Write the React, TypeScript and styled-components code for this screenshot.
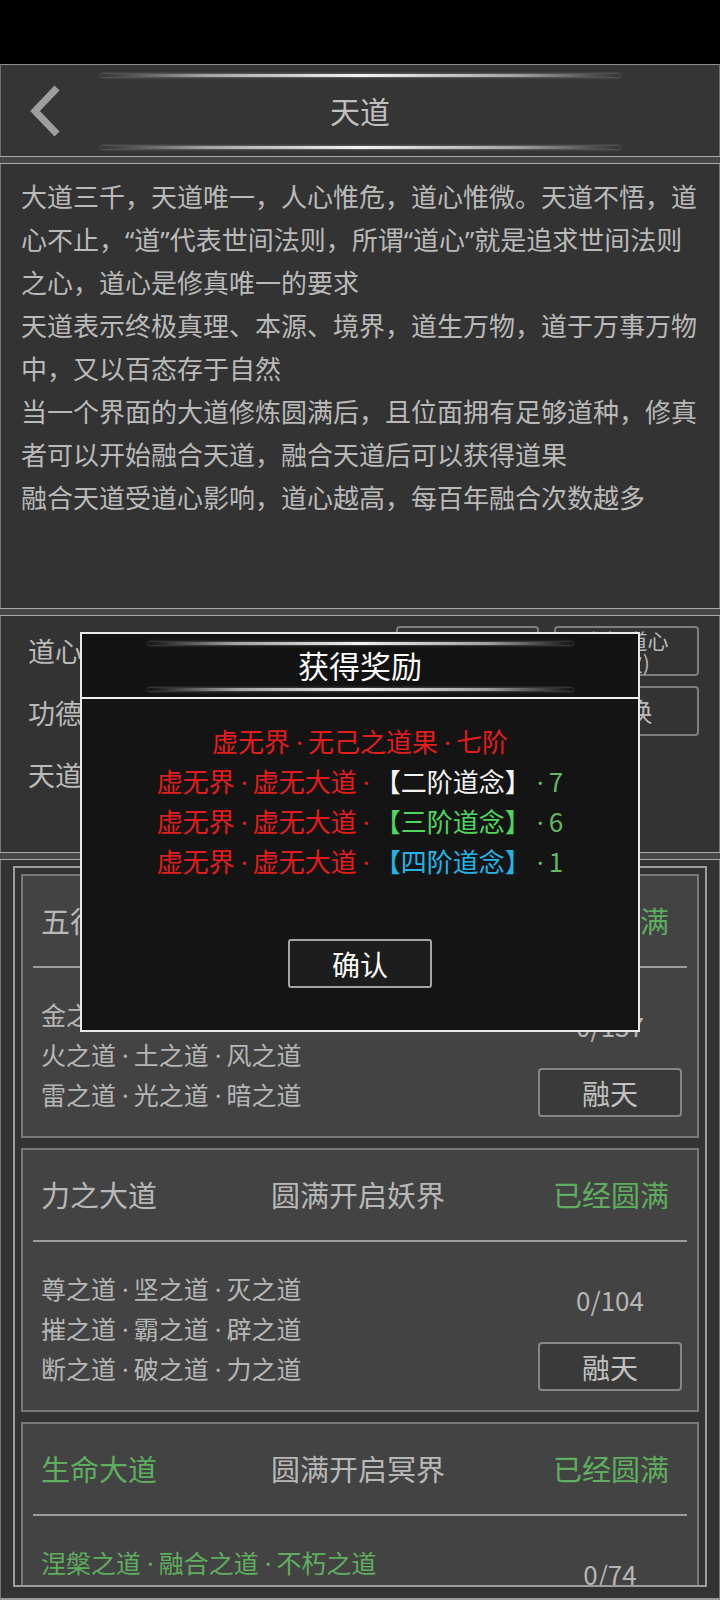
import { Fragment } from 'react';
import styled, { createGlobalStyle } from 'styled-components';

const GlobalStyle = createGlobalStyle`
  html, body {
    margin: 0;
    padding: 0;
    background: #000;
  }
  body {
    font-family: "Noto Sans CJK SC", "Noto Sans", sans-serif;
    text-spacing-trim: space-all;
  }
  * {
    box-sizing: border-box;
  }
`;

const Screen = styled.div`
  position: relative;
  width: 720px;
  height: 1600px;
  overflow: hidden;
  background: #000;
  display: flex;
  flex-direction: column;
`;

const StatusBar = styled.div`
  height: 64px;
  flex-shrink: 0;
  background: #000;
`;

const Header = styled.header`
  height: 92px;
  flex-shrink: 0;
  display: flex;
  background: #353535;
  border-top: 1px solid #8c8c8c;
  border-left: 1px solid #6c6c6c;
  border-right: 1px solid #6c6c6c;
`;

const BackButton = styled.div`
  width: 70px;
  display: flex;
  align-items: center;
  padding-left: 27px;
`;

const HeaderCenter = styled.div`
  flex: 1;
  margin-right: 70px;
  display: flex;
  flex-direction: column;
  align-items: center;
  padding-top: 9px;
`;

const Glow = styled.div<{ $width: number; $top?: number }>`
  width: ${(p) => p.$width}px;
  height: 3px;
  margin-top: ${(p) => p.$top ?? 0}px;
  border-radius: 2px;
  background: linear-gradient(
    90deg,
    rgba(150, 150, 150, 0) 0%,
    rgba(175, 175, 175, 0.9) 20%,
    #f2f2f2 50%,
    rgba(175, 175, 175, 0.9) 80%,
    rgba(150, 150, 150, 0) 100%
  );
  box-shadow: 0 0 3px rgba(220, 220, 220, 0.5);
`;

const HeaderTitle = styled.h1`
  margin: 13px 0 0;
  font-size: 30px;
  line-height: 40px;
  font-weight: 400;
  color: #c0c0c0;
`;

const Band = styled.div`
  height: 8px;
  flex-shrink: 0;
  background: #474747;
  border-top: 1px solid #a9a9a9;
  border-bottom: 1px solid #a9a9a9;
`;

const DescPanel = styled.section`
  height: 444px;
  flex-shrink: 0;
  padding: 12px 20px;
  background: #333;
  border-left: 1px solid #777;
  border-right: 1px solid #777;
`;

/* latin quotes come from Noto Sans so they stay narrow */
const DescLine = styled.div`
  font-family: "Noto Sans", "Noto Sans CJK SC", sans-serif;
  font-size: 26px;
  line-height: 43px;
  color: #bababa;
  white-space: nowrap;
`;

const StatsPanel = styled.section`
  height: 236px;
  flex-shrink: 0;
  display: flex;
  justify-content: space-between;
  padding: 4px 20px 0 27px;
  background: #333;
  border-left: 1px solid #777;
  border-right: 1px solid #777;
`;

const StatList = styled.div`
  display: flex;
  flex-direction: column;
`;

const StatRow = styled.div`
  font-size: 27px;
  line-height: 62px;
  color: #bababa;
  white-space: nowrap;
`;

const ActionGrid = styled.div`
  display: grid;
  grid-template-columns: 143px 145px;
  grid-template-rows: 50px 50px;
  column-gap: 15px;
  row-gap: 10px;
  margin-top: 6px;
`;

const ActionButton = styled.div<{ $small?: boolean; $col: number; $row: number }>`
  grid-column: ${(p) => p.$col};
  grid-row: ${(p) => p.$row};
  display: flex;
  flex-direction: column;
  align-items: center;
  justify-content: center;
  border: 2px solid #7e7e7e;
  border-radius: 4px;
  color: #bababa;
  font-size: ${(p) => (p.$small ? 21 : 26)}px;
  line-height: ${(p) => (p.$small ? 22 : 30)}px;
  white-space: nowrap;
`;

const LowerPanel = styled.section`
  flex: 1;
  padding: 6px 12px 0;
  background: #333;
  border-left: 1px solid #777;
  border-right: 1px solid #777;
  border-bottom: 2px solid #9a9a9a;
`;

const Frame = styled.div`
  height: 721px;
  overflow: hidden;
  padding: 6px 6px 0;
  border: 2px solid #9c9c9c;
  display: flex;
  flex-direction: column;
  gap: 10px;
`;

const PathCard = styled.div`
  height: 264px;
  flex-shrink: 0;
  background: #434343;
  border: 2px solid #787878;
`;

const CardHead = styled.div`
  height: 88px;
  display: grid;
  grid-template-columns: 230px 1fr auto;
  align-items: center;
  padding: 0 28px 0 18px;
  font-size: 29px;
  white-space: nowrap;
`;

const Tone = styled.span<{ $done?: boolean }>`
  color: ${(p) => (p.$done ? '#5fae5f' : '#b8b8b8')};
`;

const Divider = styled.div`
  height: 2px;
  margin: 2px 10px 0;
  background: #9d9d9d;
`;

const CardBody = styled.div`
  display: flex;
  justify-content: space-between;
  padding: 26px 15px 0 18px;
`;

const SubList = styled.div<{ $done?: boolean }>`
  font-size: 25px;
  line-height: 40px;
  color: ${(p) => (p.$done ? '#5fae5f' : '#b6b6b6')};
  white-space: nowrap;
`;

const SideColumn = styled.div`
  width: 144px;
  display: flex;
  flex-direction: column;
  align-items: center;
`;

const Count = styled.div`
  height: 64px;
  line-height: 64px;
  font-size: 26px;
  color: #b6b6b6;
`;

const FuseButton = styled.div`
  width: 144px;
  height: 49px;
  margin-top: 10px;
  display: flex;
  align-items: center;
  justify-content: center;
  border: 2px solid #868686;
  border-radius: 4px;
  background: #3a3a3a;
  color: #c2c2c2;
  font-size: 28px;
`;

/* the narrow separator dot used in every "x之道·y之道" list */
const Dot = styled.span`
  font-family: "Noto Sans", sans-serif;
  line-height: 0;
  margin: 0 5px 0 6px;
`;

/* reward popup, floats over the page */
const Dialog = styled.div`
  position: absolute;
  left: 80px;
  top: 632px;
  width: 560px;
  height: 400px;
  display: flex;
  flex-direction: column;
  background: #141414;
  border: 2px solid #e8e8e8;
`;

const DialogHead = styled.div`
  height: 65px;
  flex-shrink: 0;
  display: flex;
  flex-direction: column;
  align-items: center;
  padding-top: 8px;
  background: #121212;
  border-bottom: 2px solid #f0f0f0;
`;

const DialogTitle = styled.h2`
  margin: 2px 0 0;
  font-size: 31px;
  line-height: 36px;
  font-weight: 400;
  color: #fafafa;
`;

const DialogBody = styled.div`
  display: flex;
  flex-direction: column;
  align-items: center;
  padding-top: 22px;
`;

const RewardLine = styled.div`
  font-size: 26px;
  line-height: 40px;
  white-space: nowrap;
  text-align: center;
  text-spacing-trim: space-all;
`;

const toneColors = {
  red: '#e41c1c',
  white: '#f4f4f4',
  green: '#4fd65d',
  cyan: '#22b4e6',
  count: '#62b862',
};

type ToneName = keyof typeof toneColors;

const Seg = styled.span<{ $tone: ToneName }>`
  color: ${(p) => toneColors[p.$tone]};
`;

const ConfirmButton = styled.div`
  width: 144px;
  height: 49px;
  margin-top: 58px;
  display: flex;
  align-items: center;
  justify-content: center;
  border: 2px solid #a4a4a4;
  border-radius: 3px;
  background: #1d1d1d;
  color: #fafafa;
  font-size: 28px;
`;

function withDots(text: string) {
  return text.split('·').map((part, i) => (
    <Fragment key={i}>
      {i > 0 && <Dot>·</Dot>}
      {part}
    </Fragment>
  ));
}

const descLines = [
  '大道三千，天道唯一，人心惟危，道心惟微。天道不悟，道',
  '心不止，“道”代表世间法则，所谓“道心”就是追求世间法则',
  '之心，道心是修真唯一的要求',
  '天道表示终极真理、本源、境界，道生万物，道于万事万物',
  '中，又以百态存于自然',
  '当一个界面的大道修炼圆满后，且位面拥有足够道种，修真',
  '者可以开始融合天道，融合天道后可以获得道果',
  '融合天道受道心影响，道心越高，每百年融合次数越多',
];

const rewards: { text: string; tone: ToneName }[][] = [
  [{ text: '虚无界·无己之道果·七阶', tone: 'red' }],
  [
    { text: '虚无界·虚无大道·', tone: 'red' },
    { text: '【二阶道念】', tone: 'white' },
    { text: '·7', tone: 'count' },
  ],
  [
    { text: '虚无界·虚无大道·', tone: 'red' },
    { text: '【三阶道念】', tone: 'green' },
    { text: '·6', tone: 'count' },
  ],
  [
    { text: '虚无界·虚无大道·', tone: 'red' },
    { text: '【四阶道念】', tone: 'cyan' },
    { text: '·1', tone: 'count' },
  ],
];

const paths = [
  {
    name: '五行大道',
    realm: '圆满开启仙界',
    done: false,
    subs: ['金之道·木之道·水之道', '火之道·土之道·风之道', '雷之道·光之道·暗之道'],
    count: '0/137',
  },
  {
    name: '力之大道',
    realm: '圆满开启妖界',
    done: false,
    subs: ['尊之道·坚之道·灭之道', '摧之道·霸之道·辟之道', '断之道·破之道·力之道'],
    count: '0/104',
  },
  {
    name: '生命大道',
    realm: '圆满开启冥界',
    done: true,
    subs: ['涅槃之道·融合之道·不朽之道', '轮回之道·造化之道·生死之道', '枯荣之道·复苏之道·生命之道'],
    count: '0/74',
  },
];

export default function App() {
  return (
    <>
      <GlobalStyle />
      <Screen>
        <StatusBar />

        <Header>
          <BackButton>
            <svg width="34" height="52" viewBox="0 0 34 52">
              <polyline
                points="29,3 7,26 29,49"
                fill="none"
                stroke="#9e9e9e"
                strokeWidth="7"
              />
            </svg>
          </BackButton>
          <HeaderCenter>
            <Glow $width={519} />
            <HeaderTitle>天道</HeaderTitle>
            <Glow $width={519} $top={16} />
          </HeaderCenter>
        </Header>

        <Band />

        <DescPanel>
          {descLines.map((line) => (
            <DescLine key={line}>{line}</DescLine>
          ))}
        </DescPanel>

        <Band />

        <StatsPanel>
          <StatList>
            <StatRow>道心：3650</StatRow>
            <StatRow>功德：12800</StatRow>
            <StatRow>天道：虚无界</StatRow>
          </StatList>
          <ActionGrid>
            <ActionButton $col={1} $row={1}>悟道</ActionButton>
            <ActionButton $col={2} $row={1} $small>
              <span>参悟道心</span>
              <span>(1次)</span>
            </ActionButton>
            <ActionButton $col={2} $row={2}>兑换</ActionButton>
          </ActionGrid>
        </StatsPanel>

        <Band />

        <LowerPanel>
          <Frame>
            {paths.map((p) => (
              <PathCard key={p.name}>
                <CardHead>
                  <Tone $done={p.done}>{p.name}</Tone>
                  <Tone>{p.realm}</Tone>
                  <Tone $done>已经圆满</Tone>
                </CardHead>
                <Divider />
                <CardBody>
                  <SubList $done={p.done}>
                    {p.subs.map((s) => (
                      <div key={s}>{withDots(s)}</div>
                    ))}
                  </SubList>
                  <SideColumn>
                    <Count>{p.count}</Count>
                    <FuseButton>融天</FuseButton>
                  </SideColumn>
                </CardBody>
              </PathCard>
            ))}
          </Frame>
        </LowerPanel>

        <Dialog>
          <DialogHead>
            <Glow $width={425} />
            <DialogTitle>获得奖励</DialogTitle>
            <Glow $width={425} $top={5} />
          </DialogHead>
          <DialogBody>
            {rewards.map((line, i) => (
              <RewardLine key={i}>
                {line.map((seg) => (
                  <Seg key={seg.text} $tone={seg.tone}>
                    {withDots(seg.text)}
                  </Seg>
                ))}
              </RewardLine>
            ))}
            <ConfirmButton>确认</ConfirmButton>
          </DialogBody>
        </Dialog>
      </Screen>
    </>
  );
}
